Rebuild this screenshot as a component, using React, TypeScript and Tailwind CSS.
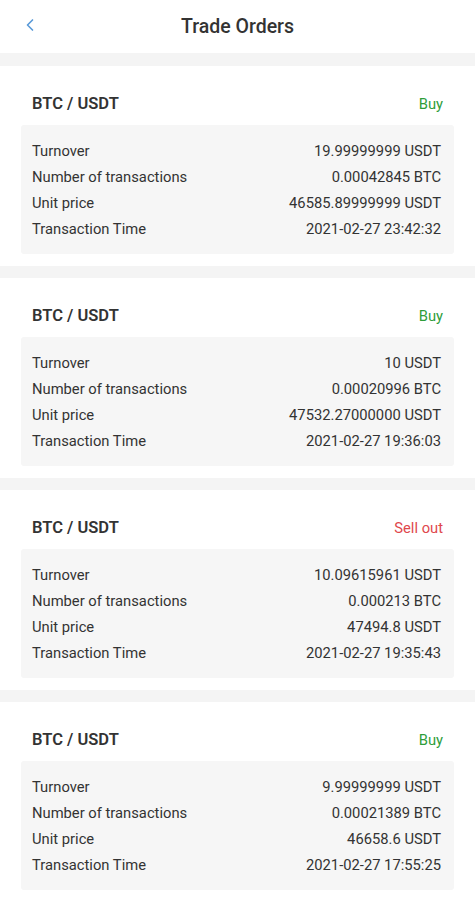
import { ChevronLeft } from 'lucide-react';

type Order = {
  side: 'Buy' | 'Sell out';
  turnover: string;
  amount: string;
  price: string;
  time: string;
};

const orders: Order[] = [
  { side: 'Buy', turnover: '19.99999999 USDT', amount: '0.00042845 BTC', price: '46585.89999999 USDT', time: '2021-02-27 23:42:32' },
  { side: 'Buy', turnover: '10 USDT', amount: '0.00020996 BTC', price: '47532.27000000 USDT', time: '2021-02-27 19:36:03' },
  { side: 'Sell out', turnover: '10.09615961 USDT', amount: '0.000213 BTC', price: '47494.8 USDT', time: '2021-02-27 19:35:43' },
  { side: 'Buy', turnover: '9.99999999 USDT', amount: '0.00021389 BTC', price: '46658.6 USDT', time: '2021-02-27 17:55:25' },
];

function Row({ label, value }: { label: string; value: string }) {
  return (
    <div className="flex justify-between items-center h-[26px] text-[14.75px] text-[#333]">
      <span>{label}</span>
      <span>{value}</span>
    </div>
  );
}

function OrderCard({ order }: { order: Order }) {
  return (
    <div className="bg-white px-[21px] pt-[27px] pb-3">
      <div className="flex justify-between items-center h-[22px] px-[11px] mb-[10px]">
        <span className="text-[16.5px] font-semibold text-[#333]">BTC / USDT</span>
        <span className={order.side === 'Buy' ? 'text-[14.75px] text-[#2e9d3a]' : 'text-[14.75px] text-[#e0474c]'}>
          {order.side}
        </span>
      </div>
      <div className="bg-[#f6f6f6] rounded-[3px] pl-[11px] pr-[13px] pt-[13px] pb-3">
        <Row label="Turnover" value={order.turnover} />
        <Row label="Number of transactions" value={order.amount} />
        <Row label="Unit price" value={order.price} />
        <Row label="Transaction Time" value={order.time} />
      </div>
    </div>
  );
}

export default function App() {
  return (
    <div className="w-[475px] h-[900px] overflow-hidden bg-[#f4f4f4]" style={{ fontFamily: 'Roboto, "Noto Sans", sans-serif' }}>
      <div className="relative h-[53px] bg-white flex items-center justify-center">
        <ChevronLeft className="absolute left-[20px] top-[15px] text-[#5a9ad8]" size={20} strokeWidth={2} />
        <span className="text-[19.5px] font-medium text-[#333]">Trade Orders</span>
      </div>
      <div className="flex flex-col gap-3 pt-[13px]">
        {orders.map((o, i) => (
          <OrderCard key={i} order={o} />
        ))}
      </div>
    </div>
  );
}
